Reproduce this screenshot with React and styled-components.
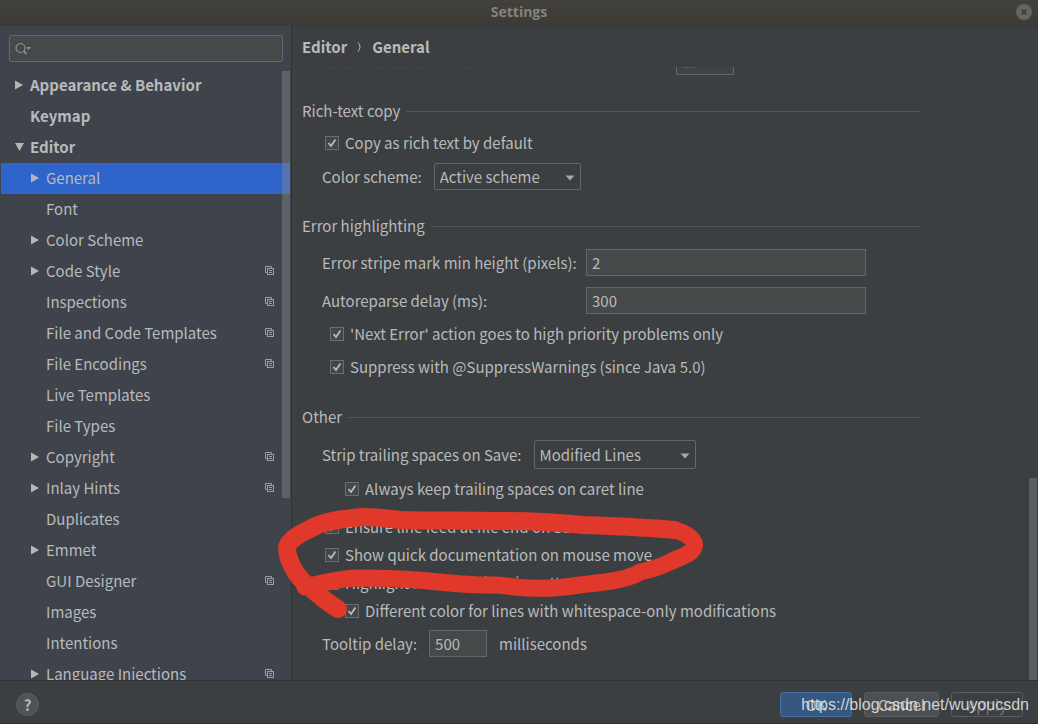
/* Settings window with the Editor > General page open. The tree on the left
 * picks the page, the right side is the scrolled page itself, and the footer
 * holds the dialog buttons.
 */

import React, { useState } from "react";
import styled, { createGlobalStyle, css } from "styled-components";

const GlobalStyle = createGlobalStyle`
  * {
    box-sizing: border-box;
  }
  body {
    margin: 0;
    background: #3c3f41;
  }
  body, button, input, select {
    font-family: "Noto Sans CJK SC", "Noto Sans", sans-serif;
    font-size: 15px;
    line-height: 24px;
    color: #b8babb;
  }
`;

const Window = styled.div`
  position: relative;
  display: flex;
  flex-direction: column;
  height: 100vh;
  overflow: hidden;
  border-bottom: 1px solid #2d2f30;
`;

const TitleBar = styled.header`
  display: grid;
  grid-template-columns: 1fr auto 1fr;
  align-items: center;
  flex: none;
  height: 26px;
  padding: 0 6px 2px;
  background: linear-gradient(#42413c, #3b3a34);
`;

const Title = styled.h1`
  grid-column: 2;
  margin: 0;
  font: bold 14px/24px "Open Sans", "Noto Sans", sans-serif;
  color: #85837d;
`;

const CloseButton = styled.button`
  display: grid;
  place-items: center;
  justify-self: end;
  width: 16px;
  height: 16px;
  padding: 0;
  border: none;
  border-radius: 50%;
  background: #66655f;
`;

const Body = styled.div`
  display: flex;
  flex: 1;
  min-height: 0;
`;

const Sidebar = styled.nav`
  display: flex;
  flex-direction: column;
  flex: none;
  width: 292px;
  border-right: 1px solid #303336;
  background: #3f434b;
`;

const SearchBox = styled.label`
  display: flex;
  align-items: center;
  flex: none;
  gap: 4px;
  height: 27px;
  margin: 9px 8px 8px 9px;
  padding: 0 5px;
  border: 1px solid #646769;
  border-radius: 2px;
  background: #45494a;
`;

const SearchInput = styled.input`
  flex: 1;
  min-width: 0;
  padding: 0;
  border: none;
  outline: none;
  background: none;
`;

const TreeArea = styled.div`
  position: relative;
  flex: 1;
  min-height: 0;
  overflow: hidden;
`;

const Tree = styled.ul`
  margin: 0;
  padding: 0 1px;
  list-style: none;
`;

const TreeLink = styled.a`
  display: flex;
  align-items: center;
  height: 31px;
  padding: 0 16px 2px ${props => (props.$nested ? 29 : 13)}px;
  color: #b8babb;
  font-weight: ${props => (props.$nested ? "normal" : "bold")};
  text-decoration: none;
  ${props =>
    props.$selected &&
    css`
      background: #2f65ca;
    `}
`;

const ArrowSlot = styled.span`
  display: flex;
  flex: none;
  width: 16px;
`;

const TreeText = styled.span`
  flex: 1;
`;

const Scrollbar = styled.div`
  position: absolute;
  width: 8px;
  right: ${props => props.$right}px;
  top: ${props => props.$top};
  height: ${props => props.$height};
  background: rgba(140, 140, 140, 0.4);
`;

const Page = styled.main`
  display: flex;
  flex-direction: column;
  flex: 1;
  min-width: 0;
  background: #3c3f41;
`;

const Breadcrumb = styled.h2`
  display: flex;
  align-items: center;
  flex: none;
  gap: 10px;
  height: 41px;
  margin: 0;
  padding: 1px 0 0 10px;
  font-size: 15px;
  line-height: 24px;
`;

/* The page is scrolled to its end, so its content sits on the bottom edge */
const Viewport = styled.div`
  position: relative;
  display: flex;
  flex-direction: column;
  justify-content: flex-end;
  flex: 1;
  min-height: 0;
  padding: 0 10px 23px;
  overflow: hidden;
`;

const Section = styled.section`
  flex: none;
  max-width: 618px;
  margin-top: 24px;
`;

const SectionTitle = styled.h3`
  display: flex;
  align-items: center;
  gap: 6px;
  height: 24px;
  margin: 0;
  font-size: 15px;
  font-weight: normal;

  &::after {
    content: "";
    flex: 1;
    height: 1px;
    background: #53575a;
  }
`;

const Row = styled.div`
  display: flex;
  align-items: center;
  gap: 12px;
  min-height: 27px;
  margin-top: ${props => props.$gap || 6}px;
  padding-left: 20px;
`;

const FieldLabel = styled.label`
  flex: none;
  width: ${props => (props.$width ? props.$width + "px" : "auto")};
  white-space: nowrap;
  color: ${props => (props.$faded ? "#484b4d" : "#b8babb")};
`;

const TextInput = styled.input`
  width: ${props => props.$width}px;
  height: 27px;
  padding: 0 5px;
  border: 1px solid #646769;
  outline: none;
  background: ${props => (props.$faded ? "#3f4345" : "#45494a")};
  color: ${props => (props.$faded ? "#55595b" : "#b8babb")};
`;

const SelectWrap = styled.span`
  display: grid;
  align-items: center;
  width: ${props => props.$width}px;
  height: ${props => props.$height || 27}px;

  > * {
    grid-area: 1 / 1;
  }
  svg {
    justify-self: end;
    margin: 2px 6px 0 0;
    pointer-events: none;
  }
`;

const StyledSelect = styled.select`
  appearance: none;
  width: 100%;
  height: 100%;
  padding: 0 5px;
  border: 1px solid #646769;
  border-radius: 2px;
  outline: none;
  background: #3c3f41;
`;

const CheckLabel = styled.label`
  display: flex;
  align-items: center;
  gap: 6px;
  height: 28px;
  margin-top: ${props => props.$gap || 0}px;
  padding-left: ${props => props.$indent}px;
`;

const CheckBox = styled.span`
  display: grid;
  flex: none;
  width: 14px;
  height: 14px;

  > * {
    grid-area: 1 / 1;
  }
  svg {
    pointer-events: none;
  }
`;

const CheckInput = styled.input`
  appearance: none;
  width: 14px;
  height: 14px;
  margin: 0;
  border: 1px solid #6b6e70;
  background: #43474a;
`;

const Footer = styled.footer`
  display: flex;
  align-items: center;
  justify-content: space-between;
  flex: none;
  height: 43px;
  padding: 5px 15px 0 16px;
  border-top: 1px solid #2f3233;
  background: #3c3f41;
`;

const HelpButton = styled.button`
  width: 23px;
  height: 23px;
  padding: 0;
  border: 1px solid #5e6163;
  border-radius: 50%;
  background: #4f5355;
  font-weight: bold;
  line-height: 20px;
`;

const ButtonGroup = styled.div`
  display: flex;
  gap: 12px;
`;

const DialogButton = styled.button`
  min-width: 72px;
  height: 25px;
  padding: 0 13px;
  border: 1px solid ${props => (props.$primary ? "#43709f" : "#595c5e")};
  border-radius: 3px;
  background: ${props => (props.$primary ? "#365880" : "#4c5052")};
  line-height: 22px;

  &:disabled {
    background: none;
    color: #727577;
  }
`;

const Watermark = styled.span`
  position: absolute;
  right: 9px;
  bottom: 6px;
  font: 16px/24px "Liberation Sans", Arial, sans-serif;
  color: rgba(235, 235, 235, 0.85);
  pointer-events: none;
`;

const Marker = styled.svg`
  position: absolute;
  left: 270px;
  top: 500px;
  pointer-events: none;
`;

const SearchIcon = () => (
  <svg width="16" height="14" viewBox="0 0 16 14" fill="none" stroke="#8b8f91">
    <circle cx="5.5" cy="6" r="4.5" strokeWidth="1.2" />
    <path d="M8.7 9.2 L11.5 12" strokeWidth="1.8" />
    <path d="M11 5 H16 L13.5 8 Z" fill="#8b8f91" stroke="none" />
  </svg>
);

const Arrow = ({ open }) => (
  <svg width="10" height="10" viewBox="0 0 10 10" fill="#b4b6b8">
    <path d={open ? "M1 1 H10 L5.5 9 Z" : "M1 0.5 L9 5 L1 9.5 Z"} />
  </svg>
);

const ProjectIcon = () => (
  <svg width="9" height="9" viewBox="0 0 9 9" fill="none" stroke="#9a9ea3">
    <path d="M2 6.5 H0.5 V0.5 H6.5 V2" />
    <rect x="2.5" y="2.5" width="6" height="6" />
    <path d="M4 4.5 H7 M4 6.5 H7" />
  </svg>
);

const Check = props => (
  <CheckLabel $indent={props.indent} $gap={props.gap}>
    <CheckBox>
      <CheckInput type="checkbox" defaultChecked />
      <svg width="14" height="14" viewBox="0 0 14 14" fill="none">
        <path d="M3.5 7 L6 10 L10.5 3.5" stroke="#b8babb" strokeWidth="1.8" />
      </svg>
    </CheckBox>
    {props.children}
  </CheckLabel>
);

const Dropdown = props => (
  <SelectWrap $width={props.width} $height={props.height}>
    <StyledSelect id={props.id}>
      <option>{props.value}</option>
    </StyledSelect>
    <svg width="10" height="6" viewBox="0 0 10 6" fill="#a5a7a9">
      <path d="M0.5 0.5 H9.5 L5 5.5 Z" />
    </svg>
  </SelectWrap>
);

const treeItems = [
  { name: "Appearance & Behavior", arrow: "closed" },
  { name: "Keymap" },
  { name: "Editor", arrow: "open" },
  { name: "General", nested: true, arrow: "closed" },
  { name: "Font", nested: true },
  { name: "Color Scheme", nested: true, arrow: "closed" },
  { name: "Code Style", nested: true, arrow: "closed", project: true },
  { name: "Inspections", nested: true, project: true },
  { name: "File and Code Templates", nested: true, project: true },
  { name: "File Encodings", nested: true, project: true },
  { name: "Live Templates", nested: true },
  { name: "File Types", nested: true },
  { name: "Copyright", nested: true, arrow: "closed", project: true },
  { name: "Inlay Hints", nested: true, arrow: "closed", project: true },
  { name: "Duplicates", nested: true },
  { name: "Emmet", nested: true, arrow: "closed" },
  { name: "GUI Designer", nested: true, project: true },
  { name: "Images", nested: true },
  { name: "Intentions", nested: true },
  { name: "Language Injections", nested: true, arrow: "closed", project: true }
];

const SettingsTree = () => {
  const [selected, setSelected] = useState("General");
  return (
    <TreeArea>
      <Tree>
        {treeItems.map(item => (
          <li key={item.name}>
            <TreeLink
              href="#"
              $nested={item.nested}
              $selected={item.name === selected}
              onClick={() => setSelected(item.name)}
            >
              <ArrowSlot>
                {item.arrow && <Arrow open={item.arrow === "open"} />}
              </ArrowSlot>
              <TreeText>{item.name}</TreeText>
              {item.project && <ProjectIcon />}
            </TreeLink>
          </li>
        ))}
      </Tree>
      <Scrollbar $right={1} $top="1px" $height="70%" />
    </TreeArea>
  );
};

const GeneralPage = () => (
  <Viewport>
    <Section>
      <Row>
        <FieldLabel htmlFor="recent" $width={342} $faded>
          Recent locations limit:
        </FieldLabel>
        <TextInput id="recent" $width={58} $faded defaultValue="25" />
      </Row>
    </Section>
    <Section>
      <SectionTitle>Rich-text copy</SectionTitle>
      <Check indent={23} gap={6}>Copy as rich text by default</Check>
      <Row>
        <FieldLabel htmlFor="scheme">Color scheme:</FieldLabel>
        <Dropdown id="scheme" width={147} value="Active scheme" />
      </Row>
    </Section>
    <Section>
      <SectionTitle>Error highlighting</SectionTitle>
      <Row $gap={11}>
        <FieldLabel htmlFor="stripe" $width={252}>
          Error stripe mark min height (pixels):
        </FieldLabel>
        <TextInput id="stripe" $width={280} defaultValue="2" />
      </Row>
      <Row $gap={11}>
        <FieldLabel htmlFor="reparse" $width={252}>
          Autoreparse delay (ms):
        </FieldLabel>
        <TextInput id="reparse" $width={280} defaultValue="300" />
      </Row>
      <Check indent={28} gap={6}>
        'Next Error' action goes to high priority problems only
      </Check>
      <Check indent={28} gap={5}>
        Suppress with @SuppressWarnings (since Java 5.0)
      </Check>
    </Section>
    <Section>
      <SectionTitle>Other</SectionTitle>
      <Row $gap={11}>
        <FieldLabel htmlFor="strip">Strip trailing spaces on Save:</FieldLabel>
        <Dropdown id="strip" width={162} height={29} value="Modified Lines" />
      </Row>
      <Check indent={43} gap={6}>Always keep trailing spaces on caret line</Check>
      <Check indent={23} gap={10}>Ensure line feed at file end on Save</Check>
      <Check indent={23}>Show quick documentation on mouse move</Check>
      <Check indent={23}>Highlight modified lines in gutter</Check>
      <Check indent={43}>
        Different color for lines with whitespace-only modifications
      </Check>
      <Row $gap={5}>
        <FieldLabel htmlFor="tooltip">Tooltip delay:</FieldLabel>
        <TextInput id="tooltip" $width={58} defaultValue="500" />
        <span>milliseconds</span>
      </Row>
    </Section>
    <Scrollbar $right={1} $top="67%" $height="33%" />
  </Viewport>
);

const App = () => (
  <Window>
    <GlobalStyle />
    <TitleBar>
      <Title>Settings</Title>
      <CloseButton aria-label="Close">
        <svg width="6" height="6" viewBox="0 0 6 6" stroke="#3b3a35">
          <path d="M0.5 0.5 L5.5 5.5 M5.5 0.5 L0.5 5.5" strokeWidth="1.5" />
        </svg>
      </CloseButton>
    </TitleBar>
    <Body>
      <Sidebar>
        <SearchBox>
          <SearchIcon />
          <SearchInput type="text" aria-label="Search settings" />
        </SearchBox>
        <SettingsTree />
      </Sidebar>
      <Page>
        <Breadcrumb>
          Editor
          <svg width="5" height="10" viewBox="0 0 5 10" fill="none">
            <path d="M1 0.5 Q5 5 1 9.5" stroke="#b8babb" />
          </svg>
          General
        </Breadcrumb>
        <GeneralPage />
      </Page>
    </Body>
    <Footer>
      <HelpButton aria-label="Help">?</HelpButton>
      <ButtonGroup>
        <DialogButton $primary>OK</DialogButton>
        <DialogButton>Cancel</DialogButton>
        <DialogButton disabled>Apply</DialogButton>
      </ButtonGroup>
    </Footer>
    <Marker width="440" height="124" viewBox="270 500 440 124" fill="none">
      <path
        d="M675 530 C655 528 610 526 583 525 C555 522 530 521 500 521
          C470 520 430 521 400 520 C385 518 375 517 362 517
          C340 519 328 521 318 525 C303 532 289 539 287 547
          C287 560 296 576 307 585 C316 593 328 603 338 609"
        stroke="#e0382b"
        strokeWidth="18"
        strokeLinecap="round"
        strokeLinejoin="round"
      />
      <path
        d="M675 530 C687 533 697 541 694 547 C692 554 682 556 668 563
          C658 568 650 570 640 572 C628 580 605 582 580 585
          C560 588 545 589 530 588 C515 588 505 585 495 585
          C465 586 430 580 400 579 C380 578 370 578 355 578
          C340 579 325 582 305 587"
        stroke="#e0382b"
        strokeWidth="17"
        strokeLinecap="round"
        strokeLinejoin="round"
      />
    </Marker>
    <Watermark>https://blog.csdn.net/wuyoucsdn</Watermark>
  </Window>
);

export default App;
